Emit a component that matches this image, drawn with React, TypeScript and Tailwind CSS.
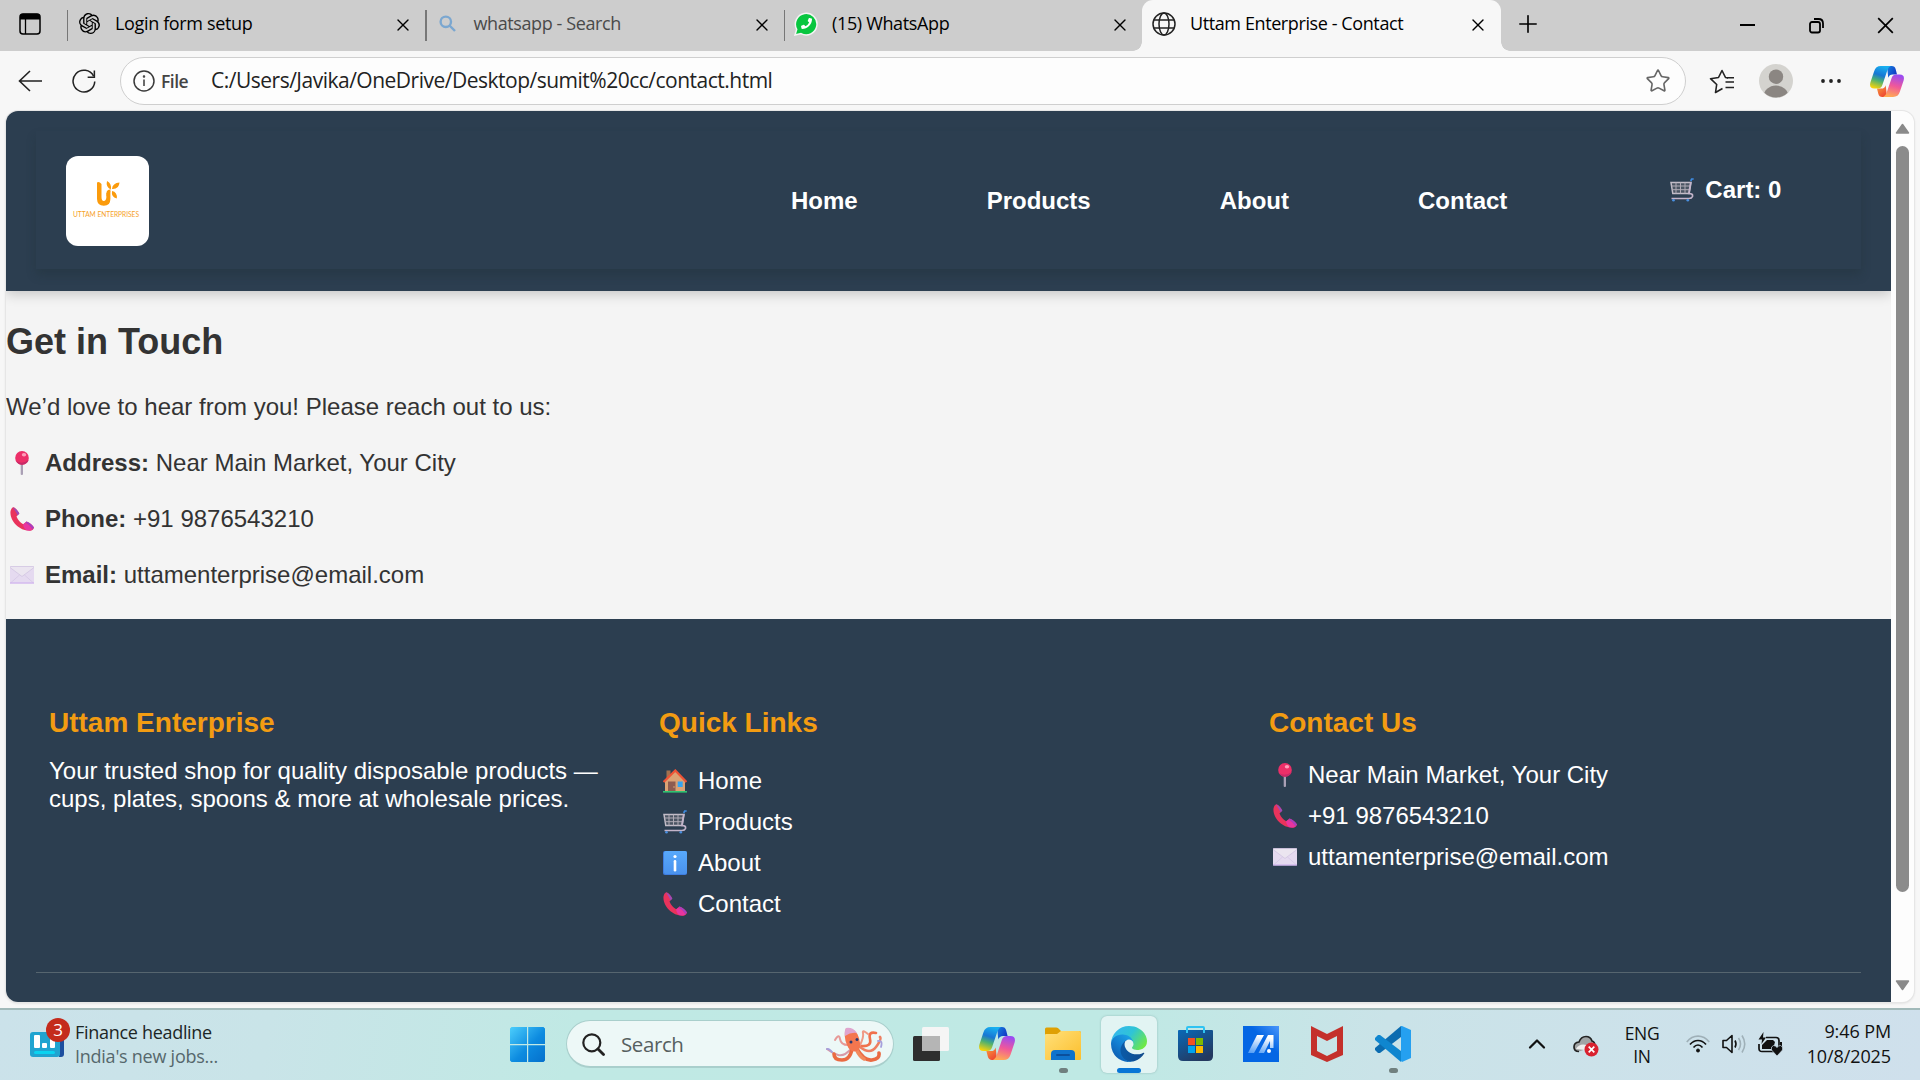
import React from "react";
import { X, Plus, ChevronUp, Star } from "lucide-react";
import { SiOpenai } from "react-icons/si";
import { FaPhoneAlt } from "react-icons/fa";

type P = { className?: string };

const ui = "font-['Open_Sans','Noto_Sans',sans-serif] whitespace-nowrap";

function Copilot({ className, id }: { className?: string; id: string }) {
  return (
    <svg className={className} viewBox="0 0 36 33" preserveAspectRatio="none">
      <defs>
        <linearGradient id={id + "a"} x1="0.6" y1="0" x2="0.3" y2="1">
          <stop offset="0" stopColor="#18b0f0" />
          <stop offset="0.4" stopColor="#1877d4" />
          <stop offset="0.65" stopColor="#4cb072" />
          <stop offset="1" stopColor="#f5d30c" />
        </linearGradient>
        <linearGradient id={id + "b"} x1="0.6" y1="0" x2="0.35" y2="1">
          <stop offset="0" stopColor="#9a4bf2" />
          <stop offset="0.5" stopColor="#f0589a" />
          <stop offset="1" stopColor="#ffab52" />
        </linearGradient>
        <linearGradient id={id + "c"} x1="0" y1="0" x2="1" y2="0.6">
          <stop offset="0" stopColor="#1585e0" />
          <stop offset="1" stopColor="#1236c4" />
        </linearGradient>
        <linearGradient id={id + "d"} x1="0" y1="0" x2="0.7" y2="1">
          <stop offset="0" stopColor="#f9a13d" />
          <stop offset="1" stopColor="#ee4432" />
        </linearGradient>
      </defs>
      <path d="M18 0h5q3.3 0 4.2 3.4L28.600 9H24q-3.600 0-4.700 3.600z" fill={`url(#${id}c)`} />
      <path d="M18 33h-5q-3.300 0-4.200-3.400L7.400 24H12q3.600 0 4.700-3.600z" fill={`url(#${id}d)`} />
      <path d="M11.500 0H22q-2.500 1-3.600 4.500L13 20.500q-1.200 3.500-5 3.500H4.500Q-1.200 24 .4 17.500L4.400 5.500Q6 0 11.500 0z" fill={`url(#${id}a)`} />
      <path d="M24.500 33H14q2.500-1 3.600-4.500L23 12.500q1.200-3.500 5-3.500h3.500q5.700 0 4.100 6.500L31.600 27.500Q30 33 24.500 33z" fill={`url(#${id}b)`} />
    </svg>
  );
}

function Cart({ className }: P) {
  return (
    <svg className={className} viewBox="0 0 24 24" fill="none">
      <path d="M1 4.500h20l-1.800 11H2.800z" fill="#4b5563" stroke="#c3bdc8" strokeWidth="1.500" />
      <path d="M6 4.500v11M10.500 4.500v11M15 4.500v11M1.500 8h19M2 11.700h18" stroke="#b0abb6" strokeWidth="1" />
      <path d="M20.800 4l-2 11.500q4.500 0 3.700 3-.8 2-3.500 2H1.500" stroke="#c3b4ca" strokeWidth="1.700" />
      <path d="M20.700 3l1-2h2" stroke="#3d8be0" strokeWidth="1.700" />
      <circle cx="3.500" cy="22.300" r="1.300" fill="#4a90e2" />
      <circle cx="17.800" cy="22.300" r="1.300" fill="#4a90e2" />
    </svg>
  );
}

function Pin({ className }: P) {
  return (
    <svg className={className} viewBox="0 0 24 24">
      <rect x="10.700" y="12" width="2.300" height="12" rx="1" fill="#aaa0b5" />
      <circle cx="12" cy="6.900" r="6.800" fill="#ec2f68" />
      <path d="M6 10a6.800 6.800 0 0 0 12.500-1Q12 14 6 10z" fill="#c72a68" />
      <ellipse cx="14" cy="3.800" rx="2.200" ry="1.700" fill="#ff9dba" />
    </svg>
  );
}

function Phone({ className }: P) {
  return (
    <svg className={className} viewBox="0 0 24 24">
      <path d="M.5 4.500C1 2 2 .5 3.500.3c2 .5 4.500 3.500 5.800 6.200L6.500 9.500c1.500 3.500 3.500 5.700 6.700 7.800l3.300-2.800c3 1 6.300 3.500 7.500 6-.3 1.800-1.800 3-4 3.300C9 24-.5 13.500.5 4.500z" fill="#e9335c" />
      <path d="M2.800.4C5 .6 8.200 4 9.400 6.500L7.600 8.600C6.500 5.500 4.500 2.800 2.800.4z" fill="#9d4bb8" />
      <path d="M16.500 14.500c3 1 6.300 3.500 7.500 6l-1.700 1.900c-1.500-3.200-4-5.200-7-6.700z" fill="#a83fc0" />
      <path d="M15.300 15.700c3 1.500 5.500 3.500 7 6.700-5 2.800-8.300.5-9.300-5z" fill="#e835a0" />
    </svg>
  );
}

function Mail({ className }: P) {
  return (
    <svg className={className} viewBox="0 0 24 24">
      <rect x="0" y="3.500" width="24" height="17" rx="1" fill="#e5daf0" />
      <path d="M0 4.500L12 13.500 24 4.500V4L23.500 3.500H.5L0 4z" fill="#ebe5f0" stroke="#cfc0e0" strokeWidth="0.700" />
      <path d="M0.500 20L9.500 12M23.500 20L14.500 12" stroke="#d3c4e4" strokeWidth="0.700" />
      <rect x="0" y="19.500" width="24" height="1" fill="#cba9ee" />
    </svg>
  );
}

function House({ className }: P) {
  return (
    <svg className={className} viewBox="0 0 24 24">
      <rect x="3.500" y="1.500" width="4" height="8" fill="#a2704e" />
      <path d="M2 12L12.300 2 22 12v10.500H2z" fill="#dba274" />
      <rect x="5" y="12.500" width="7.500" height="10" fill="#8d5c50" />
      <circle cx="11" cy="18" r=".7" fill="#e9b384" />
      <rect x="14.700" y="12.500" width="5" height="5.500" fill="#35a4f0" />
      <path d="M.6 13L12.300 1.500 23.400 13" fill="none" stroke="#ee5336" strokeWidth="2.200" />
      <rect x="0" y="22" width="24" height="1.600" fill="#2fc472" />
    </svg>
  );
}

function Info({ className }: P) {
  return (
    <svg className={className} viewBox="0 0 24 24">
      <defs>
        <linearGradient id="infobox" x1="0" y1="0" x2="0" y2="1">
          <stop offset="0" stopColor="#58a9fb" />
          <stop offset="1" stopColor="#4a92ee" />
        </linearGradient>
      </defs>
      <rect width="24" height="24" rx="2" fill="#3f7de0" />
      <rect x="1" width="23" height="23" rx="2" fill="url(#infobox)" />
      <circle cx="12" cy="5.500" r="1.600" fill="#fff" />
      <rect x="10.700" y="9" width="2.600" height="11.500" rx="1.300" fill="#fff" />
    </svg>
  );
}

function Emoji({ children }: { children: React.ReactNode }) {
  return <span className="mr-[7px] inline-flex w-[32px] shrink-0 justify-center">{children}</span>;
}

function TabClose() {
  return <X className="mt-[3px] size-[20px] shrink-0 text-black" strokeWidth={1.6} />;
}

function Tab({ icon, title, titleClass }: { icon: React.ReactNode; title: string; titleClass: string }) {
  return (
    <div className="flex h-[47px] w-[358.500px] items-center pr-[12px]">
      <div className="mt-1 h-[31px] w-[1.500px] bg-[#777]" />
      <div className="ml-[9px] flex w-[24px] justify-center">{icon}</div>
      <span className={ui + " ml-[14px] flex-1 text-[18px] " + titleClass}>{title}</span>
      <TabClose />
    </div>
  );
}

function TabBar() {
  return (
    <div className="flex h-[51px] items-start bg-[#cdcdcd]">
      <div className="flex h-[47px] w-[66.500px] items-center pl-[19px]">
        <svg className="h-[22px] w-[22px]" viewBox="0 0 22 22">
          <rect x="1" y="1" width="20" height="20" rx="3" fill="none" stroke="#000" strokeWidth="1.500" />
          <path d="M1 6.500V3.500Q1 .8 4 .8h14q3 0 3 2.700v3z" />
          <path d="M6.500 6v15" stroke="#000" strokeWidth="1.300" />
        </svg>
      </div>
      <Tab
        icon={<SiOpenai className="size-[21px] text-black" />}
        title="Login form setup"
        titleClass="text-black tracking-[-0.350px]"
      />
      <Tab
        icon={
          <svg className="size-[17px]" viewBox="0 0 17 17" fill="none" stroke="#7ba7d0" strokeWidth="2.400">
            <circle cx="6.800" cy="6.800" r="5.200" />
            <path d="M10.500 10.500l5.500 5.500" />
          </svg>
        }
        title="whatsapp - Search"
        titleClass="text-[#4a4a4a] tracking-[-0.400px]"
      />
      <Tab
        icon={
          <span className="relative flex size-[24px] items-center justify-center">
            <svg className="absolute inset-0" viewBox="0 0 24 24">
              <path d="M1 23l1.700-5.700A10.800 10.800 0 1 1 7 21.600z" fill="#08c63f" stroke="#f4f4f4" strokeWidth="1.500" />
            </svg>
            <FaPhoneAlt className="relative size-[11px] -scale-x-100 text-white" />
          </span>
        }
        title="(15) WhatsApp"
        titleClass="text-black tracking-[-0.350px]"
      />
      <div className="relative flex h-[51px] w-[359px] items-start rounded-t-[11px] bg-[#f7f7f7]">
        <div className="absolute bottom-0 -left-[9px] size-[9px] bg-[radial-gradient(circle_at_0_0,#cdcdcd_8.500px,#f7f7f7_9px)]" />
        <div className="absolute -right-[9px] bottom-0 size-[9px] bg-[radial-gradient(circle_at_100%_0,#cdcdcd_8.500px,#f7f7f7_9px)]" />
        <div className="flex h-[47px] w-full items-center pr-[13px] pl-[10px]">
          <svg className="size-[24px]" viewBox="0 0 24 24" fill="none" stroke="#222" strokeWidth="1.500">
            <circle cx="12" cy="12" r="11" />
            <ellipse cx="12" cy="12" rx="5" ry="11" />
            <path d="M2 8h20M2 16h20" />
          </svg>
          <span className={ui + " ml-[14px] flex-1 text-[18px] tracking-[-0.400px] text-black"}>
            Uttam Enterprise - Contact
          </span>
          <TabClose />
        </div>
      </div>
      <div className="flex h-[47px] flex-1 items-center pl-[13px]">
        <Plus className="size-[28px] text-black" strokeWidth={1.4} />
      </div>
      <div className="flex h-[51px] items-center gap-[52px] pr-[26px]">
        <svg className="size-[17px]" viewBox="0 0 17 17">
          <rect x="1" y="7" width="15" height="2" />
        </svg>
        <svg className="size-[17px]" viewBox="0 0 17 17" fill="none" stroke="#000" strokeWidth="1.800">
          <rect x="2" y="5" width="10" height="10.500" rx="2" />
          <path d="M6 2h4.500q4.500 0 4.500 4.500V11" />
        </svg>
        <svg className="size-[17px]" viewBox="0 0 17 17" fill="none" stroke="#000" strokeWidth="1.700">
          <path d="M1.200 1.200l14.600 14.600M15.800 1.200L1.200 15.800" />
        </svg>
      </div>
    </div>
  );
}

function Toolbar() {
  return (
    <div className="flex h-[60px] items-center bg-[#f7f7f7] pl-[18px]">
      <svg className="mb-px h-[22px] w-[24px]" viewBox="0 0 24 22" fill="none" stroke="#222" strokeWidth="1.600">
        <path d="M24 11H1.500M12 1L1.500 11 12 21" />
      </svg>
      <svg className="ml-[30px] h-[25px] w-[24px]" viewBox="0 0 25 25" fill="none" stroke="#222" strokeWidth="1.600">
        <path d="M22.500 7A11.300 11.300 0 1 0 23.700 12.500" />
        <path d="M23.300 1v7h-7" />
      </svg>
      <div className="ml-[24px] flex h-[48px] w-[1566px] items-center rounded-full border-[1.500px] border-[#cfcfcf] bg-[#fdfdfd] pr-[14px] pl-[12px]">
        <svg className="size-[22px]" viewBox="0 0 22 22" fill="none" stroke="#3a3a3a" strokeWidth="1.500">
          <circle cx="11" cy="11" r="10" />
          <path d="M11 9.500v6.500" />
          <circle cx="11" cy="6.500" r=".5" />
        </svg>
        <span className={ui + " ml-[6px] w-[50px] text-[17.500px] font-semibold tracking-[-0.500px] text-[#444]"}>
          File
        </span>
        <span className={ui + " flex-1 text-[21px] tracking-[-0.500px] text-[#222]"}>
          C:/Users/Javika/OneDrive/Desktop/sumit%20cc/contact.html
        </span>
        <Star className="size-[26px] text-[#666]" strokeWidth={1.5} />
      </div>
      <svg className="ml-[23px] h-[25px] w-[26px]" viewBox="0 0 26 25" fill="none" stroke="#222" strokeWidth="1.600" strokeLinejoin="round">
        <path d="M13.500 19.500L6.500 23.500 7.700 15.500 1.500 9.700 9.500 8.500 13 1.500 16.500 8.500 19 9" />
        <path d="M16.500 13H25M16.500 18.500H25M18 8.700H25" />
      </svg>
      <svg className="ml-[24px] size-[34px]" viewBox="0 0 34 34">
        <defs>
          <clipPath id="avatar">
            <circle cx="17" cy="17" r="16.500" />
          </clipPath>
        </defs>
        <circle cx="17" cy="17" r="17" fill="#d4d3cf" />
        <g fill="#8b8682" clipPath="url(#avatar)">
          <circle cx="17" cy="12.700" r="7.200" />
          <ellipse cx="17" cy="33" rx="12.500" ry="11.500" />
        </g>
      </svg>
      <svg className="ml-[28px] h-[4px] w-[20px]" viewBox="0 0 20 4" fill="#222">
        <circle cx="2" cy="2" r="1.900" />
        <circle cx="10" cy="2" r="1.900" />
        <circle cx="18" cy="2" r="1.900" />
      </svg>
      <Copilot id="tb" className="ml-[29px] h-[31px] w-[34px]" />
    </div>
  );
}

function SiteHeader() {
  return (
    <div className="relative h-[180px] bg-[#2c3e50] px-[30px] pt-[20px] pb-[22px] shadow-[0_3px_12px_rgba(0,0,0,0.2)]">
      <div className="flex h-[138px] items-center bg-[#2c3e50] pl-[30px] shadow-[0_6px_9px_rgba(30,45,50,0.3)]">
        <div className="mt-[2px] flex h-[90px] w-[83px] flex-col items-center rounded-[12px] bg-white pt-[25px]">
          <svg className="h-[25px] w-[24px]" viewBox="0 0 24 25" fill="#fb9b0c">
            <path d="M1 1.500Q3 0 5.500 3v13q0 4 2.300 4t2.600-4V12l4-2v8q0 6.800-6.600 6.800T1 18z" />
            <path d="M11 0q5 2.500 3.800 8.500Q9.500 6 11 0zM16 8q.5-6 7.500-6.500Q23 8.500 16 8zM16 10q5.500 1 4.800 7.500Q15 16 16 10zM10.500 12q0-3.500 4-3.500 0 5-4 7z" />
          </svg>
          <span className="mt-[4px] mr-[3px] font-['Lato',sans-serif] text-[6.600px] leading-[8px] whitespace-nowrap text-[#f6a11f]">
            UTTAM ENTERPRISES
          </span>
        </div>
        <nav className="ml-[642px] flex gap-[129px] pt-px text-2xl leading-[28px] font-bold text-white">
          <span>Home</span>
          <span>Products</span>
          <span>About</span>
          <span>Contact</span>
        </nav>
        <div className="mb-[21px] ml-[159px] flex items-center text-2xl leading-[28px] font-bold whitespace-nowrap text-white">
          <Emoji>
            <Cart className="h-[24px] w-[24px]" />
          </Emoji>
          Cart: 0
        </div>
      </div>
    </div>
  );
}

const contactRows = [
  { icon: <Pin className="size-[24px]" />, label: "Address:", text: "Near Main Market, Your City" },
  { icon: <Phone className="size-[24px]" />, label: "Phone:", text: "+91 9876543210" },
  { icon: <Mail className="size-[24px]" />, label: "Email:", text: "uttamenterprise@email.com" },
];

function SiteMain() {
  return (
    <div className="h-[328px] pt-[30px] text-2xl text-[#333]">
      <h2 className="h-[70px] text-[36px] leading-[42px] font-bold">Get in Touch</h2>
      <p className="h-[56px] leading-[32px]">We’d love to hear from you! Please reach out to us:</p>
      {contactRows.map((r) => (
        <p key={r.label} className="flex h-[56px] items-start leading-[32px]">
          <span className="flex h-[31px] items-center">
            <Emoji>{r.icon}</Emoji>
          </span>
          <span>
            <b>{r.label}</b> {r.text}
          </span>
        </p>
      ))}
    </div>
  );
}

function FooterRow({ icon, text }: { icon: React.ReactNode; text: string }) {
  return (
    <div className="flex h-[41px] items-center">
      <Emoji>{icon}</Emoji>
      {text}
    </div>
  );
}

function SiteFooter() {
  return (
    <div className="flex-1 bg-[#2c3e50] px-[30px] pt-[86px] text-2xl text-white">
      <div className="flex h-[268px] border-b border-[#56656f] pl-[13px]">
        <div className="w-[610px]">
          <h3 className="h-[52px] text-[28px] leading-[36px] font-bold text-[#f39c12]">Uttam Enterprise</h3>
          <p className="leading-[28px]">
            Your trusted shop for quality disposable products —<br />
            cups, plates, spoons &amp; more at wholesale prices.
          </p>
        </div>
        <div className="w-[610px]">
          <h3 className="h-[55px] text-[28px] leading-[36px] font-bold text-[#f39c12]">Quick Links</h3>
          <FooterRow icon={<House className="size-[24px]" />} text="Home" />
          <FooterRow icon={<Cart className="size-[24px]" />} text="Products" />
          <FooterRow icon={<Info className="size-[24px]" />} text="About" />
          <FooterRow icon={<Phone className="size-[24px]" />} text="Contact" />
        </div>
        <div>
          <h3 className="h-[49px] text-[28px] leading-[36px] font-bold text-[#f39c12]">Contact Us</h3>
          <FooterRow icon={<Pin className="size-[24px]" />} text="Near Main Market, Your City" />
          <FooterRow icon={<Phone className="size-[24px]" />} text="+91 9876543210" />
          <FooterRow icon={<Mail className="size-[24px]" />} text="uttamenterprise@email.com" />
        </div>
      </div>
    </div>
  );
}

function Scrollbar() {
  return (
    <div className="flex w-[23px] flex-col items-center rounded-r-[12px] bg-[#fdfdfd] pt-[12px] pb-[11px]">
      <svg className="h-[11px] w-[15px]" viewBox="0 0 15 11">
        <path d="M7.500 1.500L13.500 10H1.500z" fill="#8a8a8a" stroke="#8a8a8a" strokeWidth="1.500" strokeLinejoin="round" />
      </svg>
      <div className="mt-[12px] h-[746px] w-[13px] rounded-full bg-[#8b8b8b]" />
      <div className="flex-1" />
      <svg className="h-[11px] w-[15px]" viewBox="0 0 15 11">
        <path d="M7.500 9.500L13.500 1H1.500z" fill="#8a8a8a" stroke="#8a8a8a" strokeWidth="1.500" strokeLinejoin="round" />
      </svg>
    </div>
  );
}

function Octopus({ className }: P) {
  return (
    <svg className={className} viewBox="0 0 57 35" fill="none" strokeLinecap="round">
      <g stroke="#f28a70" strokeWidth="2.600">
        <path d="M26 21Q18 30 12 28T1 22" stroke="#d79aa8" strokeWidth="2" />
        <path d="M35 19Q46 20 44 12T50 6" stroke="#f0714c" />
        <path d="M34 18Q38 10 37 6T42 7" stroke="#ef9a86" strokeWidth="2" />
        <path d="M22 18Q15 18 14 12T9 13" stroke="#e79a98" strokeWidth="2" />
        <path d="M34 20Q44 28 50 20T54 10" stroke="#ee7f62" />
      </g>
      <g stroke="#ea6a42" strokeWidth="3.600">
        <path d="M26 22Q24 33 16 33T8 27" />
        <path d="M31 22Q38 34 46 33T53 26" />
        <path d="M30 22Q34 30 38 32" stroke="#f28a5c" />
      </g>
      <path d="M1 22Q3 21 6 25M52 14Q57 13 55 20" stroke="#a5a0dd" strokeWidth="1.800" />
      <path d="M20 1Q30 1 33 11 36 22 31 24 24 26 21 18 17 9 20 1z" fill="#f4764f" />
      <path d="M20 1Q27 0 31 6 25 5 19 9 18 4 20 1z" fill="#dfa5cf" />
      <circle cx="25" cy="15" r="1.500" fill="#2c3a70" />
      <circle cx="31" cy="12.500" r="1.500" fill="#2c3a70" />
    </svg>
  );
}

function Edge({ className }: P) {
  return (
    <svg className={className} viewBox="0 0 256 256">
      <defs>
        <linearGradient id="edge1" x1="0.2" y1="0.5" x2="1" y2="0.5">
          <stop offset="0" stopColor="#0c59a4" />
          <stop offset="1" stopColor="#114a8b" />
        </linearGradient>
        <linearGradient id="edge2" x1="0.8" y1="0.2" x2="0.3" y2="0.9">
          <stop offset="0" stopColor="#1b9de2" />
          <stop offset="0.5" stopColor="#127fd2" />
          <stop offset="1" stopColor="#0d61b5" />
        </linearGradient>
        <linearGradient id="edge3" x1="0" y1="0.2" x2="1" y2="0.7">
          <stop offset="0" stopColor="#35b6f0" />
          <stop offset="0.5" stopColor="#2fc4d6" />
          <stop offset="1" stopColor="#70ea42" />
        </linearGradient>
      </defs>
      <path fill="url(#edge1)" d="M231 190.500c-3.400 1.800-6.900 3.400-10.500 4.700a101.700 101.700 0 0 1-35.900 6.500c-47.300 0-88.500-32.500-88.500-74.300a31.500 31.500 0 0 1 16.400-27.300c-42.800 1.800-53.800 46.400-53.800 72.500 0 74 68.100 81.400 82.800 81.400 7.900 0 19.800-2.300 27-4.600l1.300-.4a128.300 128.300 0 0 0 66.600-52.800 4 4 0 0 0-5.400-5.700z" />
      <path fill="url(#edge2)" d="M105.700 241.400a79.200 79.200 0 0 1-22.700-21.300 80.700 80.700 0 0 1 29.500-120c3.200-1.500 8.500-4.100 15.600-4a32.400 32.400 0 0 1 25.700 13 31.900 31.900 0 0 1 6.300 18.700c0-.2 24.500-79.600-80-79.600-43.900 0-80 41.600-80 78.200a130.200 130.200 0 0 0 12.100 56 128 128 0 0 0 156.400 67.100 75.500 75.500 0 0 1-62.800-8z" />
      <path fill="url(#edge3)" d="M152.300 148.900c-.8 1-3.300 2.500-3.300 5.700 0 2.600 1.700 5.100 4.700 7.200 14.400 10 41.500 8.700 41.600 8.700a59.600 59.600 0 0 0 30.300-8.300 61.400 61.400 0 0 0 30.400-52.900c.3-22.400-8-37.300-11.300-43.900C223.500 23.900 177.700 0 128 0A128 128 0 0 0 0 126.200c.5-36.500 36.800-66 80-66 3.500 0 23.500.3 42 10a72.600 72.600 0 0 1 30.900 29.300c6.100 10.600 7.200 24.100 7.200 29.500 0 5.400-2.700 13.300-7.800 19.900z" />
    </svg>
  );
}

function AppSlot({ children, mark, active }: { children: React.ReactNode; mark?: boolean; active?: boolean }) {
  return (
    <div className="flex w-[66px] justify-center">
      <div
        className={
          active
            ? "relative flex h-[57px] w-[56px] items-center justify-center rounded-[6px] bg-[#e2f4f3] pb-[2px] shadow-[0_0_2px_rgba(90,130,130,0.5)]"
            : "relative flex h-[57px] w-[56px] items-center justify-center pb-[2px]"
        }
      >
        {children}
        {mark && <span className="absolute bottom-0 h-[5px] w-[9px] rounded-full bg-[#70807f]" />}
        {active && <span className="absolute bottom-0 h-[5px] w-[24px] rounded-full bg-[#0876d6]" />}
      </div>
    </div>
  );
}

function Taskbar() {
  return (
    <div className="flex h-[72px] items-start border-t-2 border-[#a1b9b9] bg-[linear-gradient(100deg,#cbe2ea_0%,#c9e4e8_14%,#c0e9e4_30%,#bfe9e4_58%,#cae3e8_72%,#cfe0ec_100%)]">
      <div className="flex w-[510px] pl-[30px]">
        <div className="relative mt-[22px] h-[25px] w-[34px]">
          <svg className="h-[25px] w-[34px]" viewBox="0 0 34 25">
            <path d="M29 4h5v18q0 3-3 3h-2z" fill="#1d4f9f" />
            <rect width="30" height="25" rx="3" fill="#20a4d0" />
            <rect x="4" y="3" width="6" height="13" rx="1" fill="#fff" />
            <rect x="12" y="11" width="5" height="5" rx="1" fill="#fff" />
            <rect x="20" y="7" width="5" height="9" rx="1" fill="#fff" />
            <rect x="4" y="19" width="21" height="3" rx="1.500" fill="#0bd3f0" />
          </svg>
          <span
            className={
              ui +
              " absolute -top-[14px] left-[16px] flex size-[24px] items-center justify-center rounded-full bg-[#c42b1c] text-[17px] text-white"
            }
          >
            3
          </span>
        </div>
        <div className={ui + " mt-[10px] ml-[11px] text-[18px] leading-[24px] text-[#1c2626]"}>
          <div className="tracking-[-0.300px]">Finance headline</div>
          <div className="tracking-[-0.250px] text-[#56686c]">India's new jobs...</div>
        </div>
      </div>
      <svg className="mt-[17px] size-[35px]" viewBox="0 0 35 35">
        <defs>
          <linearGradient id="win" x1="0" y1="0" x2="1" y2="1">
            <stop offset="0" stopColor="#4ccefc" />
            <stop offset="0.550" stopColor="#0d8be0" />
            <stop offset="1" stopColor="#0570cc" />
          </linearGradient>
        </defs>
        <path fill="url(#win)" d="M1.500 0H17v17H0V1.500zM18.200 0h15.300L35 1.500V17H18.200zM0 18.200h17V35H1.500L0 33.500zM18.200 18.200H35v15.300L33.500 35H18.200z" />
      </svg>
      <div className="mt-[10px] ml-[21px] flex h-[48px] w-[328px] items-center rounded-full border border-b-2 border-[#a9cfcc] bg-[#edf8f7] pt-px pr-[10px] pl-[15px]">
        <svg className="size-[23px]" viewBox="0 0 23 23" fill="none" stroke="#222" strokeWidth="2.200" strokeLinecap="round">
          <circle cx="9.800" cy="9.800" r="8.500" />
          <path d="M16 16l5.500 5.500" strokeWidth="2.800" />
        </svg>
        <span className={ui + " ml-[16px] flex-1 text-[20.500px] tracking-[-0.400px] text-[#56605f]"}>Search</span>
        <Octopus className="h-[35px] w-[57px]" />
      </div>
      <div className="mt-[6px] ml-[4px] flex">
        <AppSlot>
          <svg className="h-[34px] w-[36px]" viewBox="0 0 36 34">
            <rect y="9" width="27" height="25" rx="1.500" fill="#2e2e2e" />
            <rect x="9" width="27" height="24" rx="1.500" fill="#f5f5f5" />
            <path d="M9 9h18v15H9z" fill="#b5b5b5" />
          </svg>
        </AppSlot>
        <AppSlot>
          <Copilot id="tk" className="h-[33px] w-[36px]" />
        </AppSlot>
        <AppSlot mark>
          <svg className="h-[33px] w-[36px]" viewBox="0 0 36 33">
            <defs>
              <linearGradient id="fold" x1="0" y1="0" x2="1" y2="1">
                <stop offset="0" stopColor="#ffe07a" />
                <stop offset="1" stopColor="#fcbf2d" />
              </linearGradient>
            </defs>
            <path d="M0 8V2Q0 .5 1.500.5H11q1.500 0 2.500 1L16 4h18q2 0 2 2v3H0z" fill="#dfa003" />
            <path d="M0 8q0-1 1-1h11l4-3h18q2 0 2 2v26q0 1-1 1H1q-1 0-1-1z" fill="url(#fold)" />
            <path d="M6 33v-6q0-4 4-4h16q4 0 4 4v6z" fill="#0f73cc" />
            <rect x="11" y="27" width="14" height="2" rx="1" fill="#0b4f9c" />
          </svg>
        </AppSlot>
        <AppSlot active>
          <Edge className="size-[36px]" />
        </AppSlot>
        <AppSlot>
          <svg className="size-[35px]" viewBox="0 0 35 35">
            <defs>
              <linearGradient id="store" x1="0" y1="0" x2="0.600" y2="1">
                <stop offset="0" stopColor="#0969b8" />
                <stop offset="1" stopColor="#24395f" />
              </linearGradient>
            </defs>
            <path d="M0 5q0-1 1-1h33q1 0 1 1v25q0 5-5 5H5q-5 0-5-5z" fill="url(#store)" />
            <path d="M9 7V2q0-1 1-1h15q1 0 1 1v5" fill="none" stroke="#2fc3f2" strokeWidth="2" />
            <rect x="10" y="12" width="7" height="7" fill="#f25022" />
            <rect x="18" y="12" width="7" height="7" fill="#7fba00" />
            <rect x="10" y="20" width="7" height="7" fill="#00a4ef" />
            <rect x="18" y="20" width="7" height="7" fill="#ffb900" />
          </svg>
        </AppSlot>
        <AppSlot>
          <svg className="size-[36px]" viewBox="0 0 36 36">
            <defs>
              <linearGradient id="asus" x1="0" y1="1" x2="1" y2="0">
                <stop offset="0.600" stopColor="#0466e4" />
                <stop offset="1" stopColor="#4a96fb" />
              </linearGradient>
              <linearGradient id="stroke" x1="0" y1="1" x2="0.300" y2="0">
                <stop offset="0" stopColor="#4f9bf5" />
                <stop offset="1" stopColor="#fff" />
              </linearGradient>
            </defs>
            <rect width="36" height="36" fill="url(#asus)" />
            <path d="M5 27L14 9h7L11 27zM15.500 27L25 9h5.500v13H27v-7l-6 12z" fill="url(#stroke)" />
            <circle cx="26" cy="25" r="2" fill="#fff" />
          </svg>
        </AppSlot>
        <AppSlot>
          <svg className="h-[36px] w-[32px]" viewBox="0 0 32 36">
            <path fillRule="evenodd" fill="#c4302b" d="M0 0L16 8 32 0V29L16 36 0 29zM6 10V25L16 30 26 25V10L16 15z" />
          </svg>
        </AppSlot>
        <AppSlot mark>
          <svg className="size-[36px]" viewBox="0 0 36 36">
            <path d="M26 0v11L5 27 3 27 0 24V22z" fill="#0b6cb0" />
            <path d="M26 36V25L5 9H3L0 12V14z" fill="#0f86cf" />
            <path d="M26 0L27 0 36 4V32L27 36 26 35z" fill="#25a0f0" />
          </svg>
        </AppSlot>
      </div>
      <div className="flex h-[64px] flex-1 items-start">
        <ChevronUp className="mt-[20px] ml-[97px] size-[28px] text-[#111]" strokeWidth={1.9} />
        <svg className="mt-[25px] ml-[22px] h-[23px] w-[27px]" viewBox="0 0 27 23">
          <path d="M6 16.500Q1 16.500 1 12t5-5Q8 1.500 13 1.500q4.500 0 6 4.500 3 1 3 5" fill="#a0a4a5" stroke="#222" strokeWidth="1.700" />
          <path d="M3 14Q6 8 14 10l-2 5z" fill="#eee" />
          <circle cx="18.500" cy="14.500" r="7" fill="#d92230" />
          <path d="M15.700 11.700l5.600 5.600M21.300 11.700l-5.600 5.600" stroke="#fff" strokeWidth="1.700" />
        </svg>
        <div className={ui + " mt-[12px] ml-[19px] w-[46px] text-center text-[17.500px] leading-[23px] tracking-[-0.400px] text-[#111]"}>
          <div>ENG</div>
          <div>IN</div>
        </div>
        <svg className="mt-[25px] ml-[21px] h-[18px] w-[24px]" viewBox="0 0 24 18" fill="none" stroke="#111" strokeWidth="1.700">
          <path d="M.8 7Q5.500 1.200 12 1.200T23.200 7" stroke="#9fb0b8" />
          <path d="M4 9.500Q7.500 5.500 12 5.500T20 9.500" />
          <path d="M7.500 12.500Q9.500 10 12 10t4.500 2.500" />
          <circle cx="12" cy="15.500" r="1.500" fill="#111" strokeWidth="1" />
        </svg>
        <svg className="mt-[24px] ml-[12px] h-[20px] w-[24px]" viewBox="0 0 24 20" fill="none" stroke="#111" strokeWidth="1.600" strokeLinejoin="round">
          <path d="M1 6.500h3.500L10 1.500v17L4.500 13.500H1z" />
          <path d="M13 6.500q2 3.500 0 7" />
          <path d="M16.500 4q4 6 0 12M20 1.500q5.500 8.500 0 17" stroke="#9fb0b8" />
        </svg>
        <svg className="mt-[22px] ml-[12px] h-[25px] w-[26px]" viewBox="0 0 26 25">
          <path d="M8 5.500h10q3 0 3 3v8q0 3-3 3H4q-3 0-3-3V12" fill="none" stroke="#111" strokeWidth="1.700" />
          <path d="M22 10h2v5h-2z" fill="#111" />
          <path d="M9 8h6l2 2-2 7H4v-4z" fill="#111" />
          <path d="M5.500 0L.5 7.500H4L3.500 12 8 5.500H5z" fill="#111" />
          <path d="M19 24L13.500 18q-1-3.500 2-4.500 2 0 3.500 2 1.500-2 3.500-2 3 1 2 4.500z" fill="#111" stroke="#cfe0ec" strokeWidth=".7" />
        </svg>
        <div className={ui + " mt-[9px] flex-1 pr-[29px] text-right text-[18px] leading-[24.500px] tracking-[-0.100px] text-[#111]"}>
          <div>9:46 PM</div>
          <div>10/8/2025</div>
        </div>
      </div>
    </div>
  );
}

export default function App() {
  return (
    <div className="flex h-[1080px] w-[1920px] flex-col overflow-hidden bg-[#f7f7f7] font-['Liberation_Sans',Arial,sans-serif]">
      <TabBar />
      <Toolbar />
      <div className="mb-[6px] ml-[6px] flex h-[891px] w-[1908px] overflow-hidden rounded-[12px] bg-[#f4f4f4] shadow-[0_0_0_1px_#e6e6e6,0_1px_3px_rgba(0,0,0,0.15)]">
        <div className="flex w-[1885px] flex-col overflow-hidden">
          <SiteHeader />
          <SiteMain />
          <SiteFooter />
        </div>
        <Scrollbar />
      </div>
      <Taskbar />
    </div>
  );
}
